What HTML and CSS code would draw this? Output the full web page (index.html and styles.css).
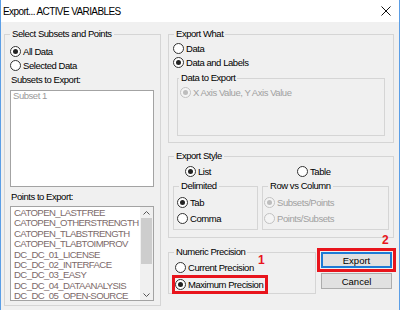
FILE: index.html
```html
<!DOCTYPE html>
<html lang="en">
<head>
	<meta charset="UTF-8">
	<title>Export... ACTIVE VARIABLES</title>
	<link rel="stylesheet" href="styles.css">
</head>
<body>
	<div class="window">
		<div class="titlebar">
			<span class="title">Export... ACTIVE VARIABLES</span>
			<svg class="close" width="10" height="10" viewBox="0 0 10 10"><path d="M0.5 0.5L9.5 9.5M9.5 0.5L0.5 9.5" stroke="#111" stroke-width="1"/></svg>
		</div>
		<div class="client">
			<fieldset class="group pick">
				<legend>Select Subsets and Points</legend>
				<div class="opt top"><span class="radio on"></span>All Data</div>
				<div class="opt"><span class="radio"></span>Selected Data</div>
				<div class="caption cap1">Subsets to Export:</div>
				<div class="listbox subsets">
					<div class="items"><div class="item dim">Subset 1</div></div>
				</div>
				<div class="caption cap2">Points to Export:</div>
				<div class="listbox points">
					<div class="items">
						<div class="item">CATOPEN_LASTFREE</div>
						<div class="item">CATOPEN_OTHERSTRENGTH</div>
						<div class="item">CATOPEN_TLABSTRENGTH</div>
						<div class="item">CATOPEN_TLABTOIMPROV</div>
						<div class="item">DC_DC_01_LICENSE</div>
						<div class="item">DC_DC_02_INTERFACE</div>
						<div class="item">DC_DC_03_EASY</div>
						<div class="item">DC_DC_04_DATAANALYSIS</div>
						<div class="item">DC_DC_05_OPEN-SOURCE</div>
					</div>
					<div class="scrollbar">
						<span class="arrow"><svg width="7" height="4" viewBox="0 0 7 4"><path d="M0.5 3.5L3.5 0.5L6.5 3.5" fill="none" stroke="#555"/></svg></span>
						<span class="thumb"></span>
						<span class="arrow end"><svg width="7" height="4" viewBox="0 0 7 4"><path d="M0.5 0.5L3.5 3.5L6.5 0.5" fill="none" stroke="#555"/></svg></span>
					</div>
				</div>
			</fieldset>
			<div class="side">
				<fieldset class="group what">
					<legend>Export What</legend>
					<div class="opt top"><span class="radio"></span>Data</div>
					<div class="opt"><span class="radio on"></span>Data and Labels</div>
					<fieldset class="group sub">
						<legend>Data to Export</legend>
						<div class="opt off"><span class="radio on"></span>X Axis Value, Y Axis Value</div>
					</fieldset>
				</fieldset>
				<fieldset class="group style">
					<legend>Export Style</legend>
					<div class="kind">
						<div class="opt"><span class="radio on"></span>List</div>
						<div class="opt"><span class="radio"></span>Table</div>
					</div>
					<div class="pair">
						<fieldset class="group delim">
							<legend>Delimited</legend>
							<div class="opt top"><span class="radio on"></span>Tab</div>
							<div class="opt"><span class="radio"></span>Comma</div>
						</fieldset>
						<fieldset class="group order">
							<legend>Row vs Column</legend>
							<div class="opt off top"><span class="radio on"></span>Subsets/Points</div>
							<div class="opt off"><span class="radio"></span>Points/Subsets</div>
						</fieldset>
					</div>
				</fieldset>
				<div class="bottom">
					<fieldset class="group precision">
						<legend>Numeric Precision</legend>
						<span class="note one">1</span>
						<div class="opt top"><span class="radio"></span>Current Precision</div>
						<div class="opt mark"><span class="radio on"></span>Maximum Precision</div>
					</fieldset>
					<div class="buttons">
						<span class="note two">2</span>
						<button class="btn default mark">Export</button>
						<button class="btn">Cancel</button>
					</div>
				</div>
			</div>
		</div>
	</div>
</body>
</html>
```
FILE: styles.css
```css
*{
	margin: 0;
	padding: 0;
	box-sizing: border-box;
}
body{
	font-family: "Liberation Sans", Arial, sans-serif;
	font-size: 9.5px;
	letter-spacing: -0.45px;
	color: #000;
	background: #fff;
}
.window{
	width: 400px;
	height: 310px;
	border-left: 1px solid #5b9ee6;
	border-right: 1px solid #5b9ee6;
	display: flex;
	flex-direction: column;
}
.titlebar{
	height: 22px;
	background: #fff;
	display: flex;
	align-items: center;
	justify-content: space-between;
	padding: 0 8px 0 2px;
}
.title{
	font-size: 10px;
	letter-spacing: -0.6px;
}
.client{
	flex: 1;
	background: #f0f0f0;
	display: flex;
	align-items: flex-start;
	gap: 7px;
	padding: 6px 0 0 3px;
}

/* group boxes */
.group{
	border: 1px solid #d5d5d5;
	min-width: 0;
}
.group legend{
	padding: 0 2px;
	margin-left: 5px;
	line-height: 12px;
}

/* radio rows */
.opt{
	display: flex;
	align-items: center;
	height: 14px;
	white-space: nowrap;
}
.radio{
	flex: none;
	width: 11px;
	height: 11px;
	margin-right: 2px;
	border: 1px solid #333;
	border-radius: 50%;
	background: #fff;
	display: flex;
	align-items: center;
	justify-content: center;
}
.radio.on::after{
	content: "";
	width: 5px;
	height: 5px;
	border-radius: 50%;
	background: #222;
}
.opt.off{
	color: #a0a0a0;
}
.opt.off .radio{
	border-color: #c2c2c2;
	background: #f4f4f4;
}
.opt.off .radio.on::after{
	background: #bdbdbd;
}

/* left column */
.pick{
	width: 157px;
	height: 278px;
}
.pick .opt{
	margin-left: 5px;
}
.pick .opt.top{
	margin-top: 4px;
}
.caption{
	line-height: 12px;
	margin-left: 6px;
}
.cap1{
	margin-top: 2px;
}
.cap2{
	margin-top: 4px;
}
.listbox{
	display: flex;
	width: 144px;
	margin-left: 5px;
	background: #fff;
	border: 1px solid #a3a3a3;
}
.subsets{
	height: 97px;
	margin-top: 4px;
}
.points{
	height: 95px;
	margin-top: 3px;
}
.items{
	flex: 1;
	overflow: hidden;
	white-space: nowrap;
}
.subsets .items{
	padding-left: 2px;
	line-height: 10px;
}
.points .items{
	padding: 1px 0 0 3px;
	font-size: 9.6px;
	line-height: 10.4px;
	letter-spacing: -0.6px;
	color: #7c6a6a;
}
.item.dim{
	color: #9a9a9a;
}
.scrollbar{
	width: 13px;
	display: flex;
	flex-direction: column;
	align-items: center;
	background: #f0f0f0;
}
.arrow{
	height: 11px;
	display: flex;
	align-items: center;
}
.arrow.end{
	margin-top: auto;
}
.thumb{
	width: 11px;
	height: 46px;
	background: #cdcdcd;
}

/* right column */
.side{
	width: 226px;
	display: flex;
	flex-direction: column;
}
.what{
	height: 115px;
}
.what > .opt{
	margin-left: 4px;
}
.what > .opt.top{
	margin-top: 1px;
}
.sub{
	width: 208px;
	height: 64px;
	margin: 3px 0 0 8px;
}
.sub legend{
	margin-left: 1px;
}
.sub .opt{
	margin: 1px 0 0 2px;
}
.style{
	height: 88px;
	margin-top: 7px;
}
.kind{
	display: grid;
	grid-template-columns: 128px auto;
	margin-top: 2px;
}
.kind .opt:first-child{
	padding-left: 16px;
}
.pair{
	display: flex;
	gap: 4px;
	margin: 2px 0 0 4px;
}
.delim{
	width: 85px;
	height: 50px;
}
.order{
	width: 127px;
	height: 50px;
}
.pair .opt{
	height: 16px;
}
.pair .opt.top{
	margin-top: 2px;
}
.delim .opt{
	margin-left: 3px;
}
.order .opt{
	margin-left: 1px;
}
.bottom{
	display: flex;
	align-items: flex-start;
	gap: 5px;
	margin-top: 8px;
}
.precision{
	position: relative;
	width: 148px;
	height: 48px;
}
.precision .opt{
	height: 16px;
	margin-left: 6px;
}
.precision .opt.top{
	margin-top: 1px;
}
.precision .opt.mark{
	width: 90px;
	height: 13px;
	margin-top: 3px;
	outline: 3px solid #e8141c;
}
.buttons{
	position: relative;
	width: 71px;
	padding-top: 6px;
	display: flex;
	flex-direction: column;
	gap: 5px;
}
.btn{
	font: inherit;
	height: 16px;
	width: 71px;
	background: #e1e1e1;
	border: 1px solid #adadad;
	color: #000;
}
.btn.default{
	border: 2px solid #1c7bd6;
}
.btn.mark{
	outline: 3px solid #e8141c;
	outline-offset: 1px;
}

/* red annotation numbers */
.note{
	position: absolute;
	color: #e8141c;
	font: bold 12px "Liberation Sans", Arial, sans-serif;
	line-height: 12px;
	letter-spacing: 0;
}
.one{
	left: 89px;
	top: -4px;
}
.two{
	left: 61px;
	top: -12px;
}
```
